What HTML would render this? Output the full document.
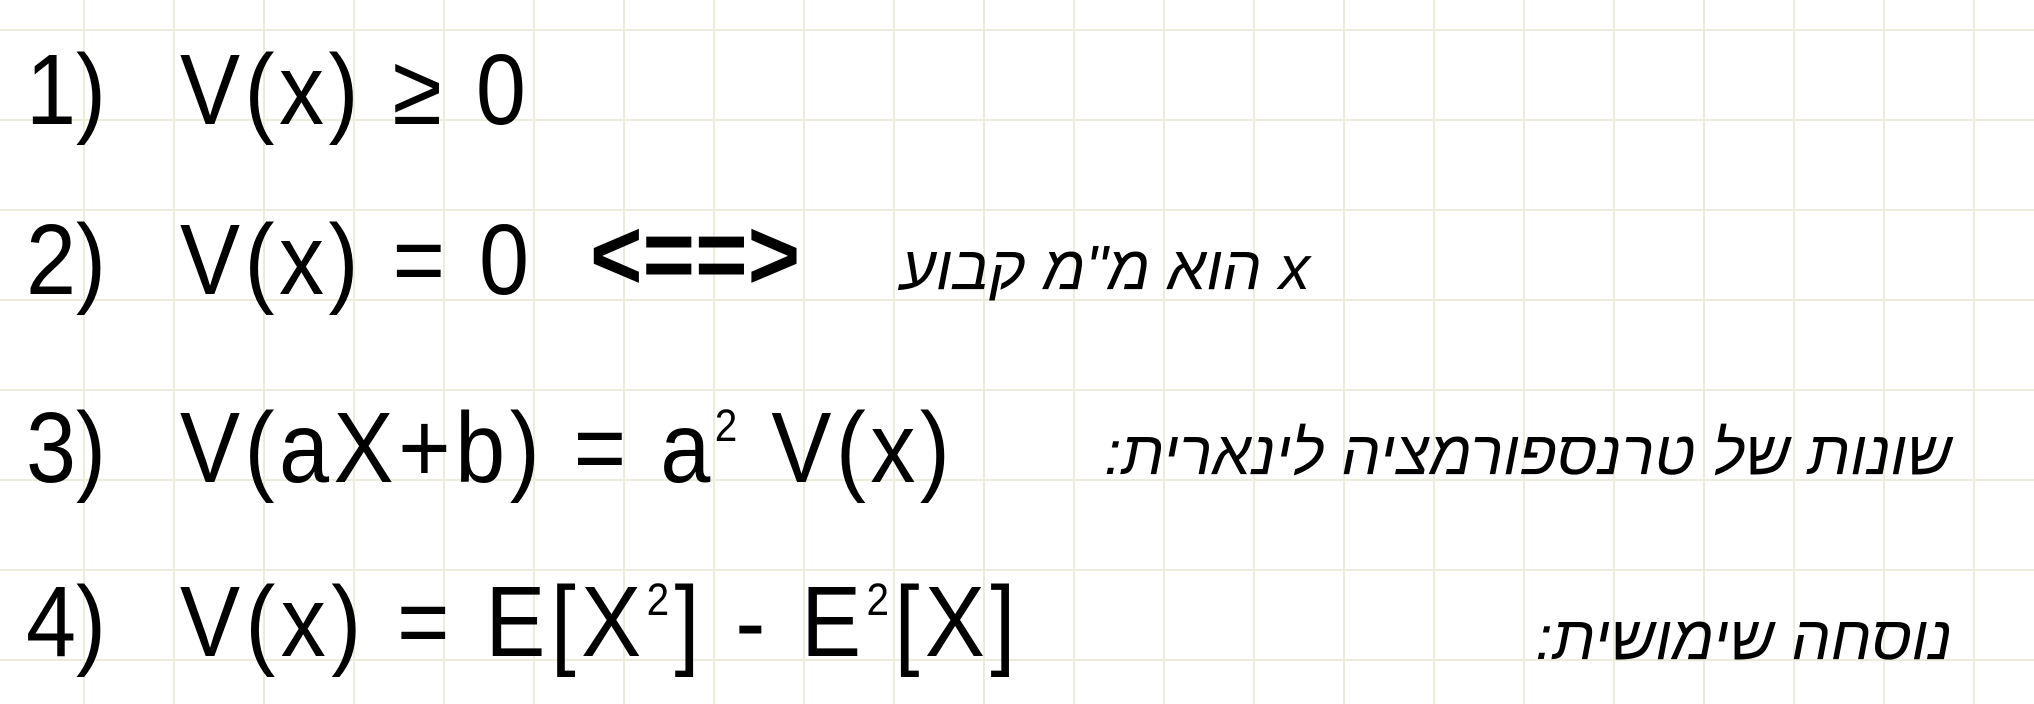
<!DOCTYPE html>
<html><head><meta charset="utf-8"><style>
html,body{margin:0;padding:0}
body{width:2034px;height:704px;overflow:hidden;background-color:#fff;
background-image:linear-gradient(to right,#ecebdc 2px,transparent 2px),linear-gradient(to bottom,#ecebdc 2px,transparent 2px);
background-size:90px 90px;background-position:83px 29px;position:relative;
font-family:"Liberation Sans","DejaVu Sans",sans-serif;color:#000}
.t{position:absolute;white-space:nowrap;line-height:1}
.m{font-size:100px;transform:scaleX(0.9);transform-origin:left top;letter-spacing:5px}
.h{font-size:62px;direction:rtl;font-style:italic}
sup{font-size:45%;vertical-align:top;position:relative;top:0.1em}
</style></head><body>
<div class="t m" style="left:26px;top:40px;letter-spacing:0">1)</div>
<div class="t m" style="left:180px;top:40px">V(x) ≥ 0</div>

<div class="t m" style="left:26px;top:210px;letter-spacing:0">2)</div>
<div class="t m" style="left:180px;top:210px">V(x) = 0</div>
<div class="t m" style="left:590px;top:205px;font-weight:bold;letter-spacing:0">&lt;==&gt;</div>
<div class="t h" style="right:724px;top:238px">x הוא מ"מ קבוע</div>

<div class="t m" style="left:26px;top:398px;letter-spacing:0">3)</div>
<div class="t m" style="left:180px;top:398px">V(aX+b) = a<sup>2</sup> V(x)</div>
<div class="t h" style="right:82px;top:423px">שונות של טרנספורמציה לינארית:</div>

<div class="t m" style="left:26px;top:572px;letter-spacing:0">4)</div>
<div class="t m" style="left:180px;top:572px;letter-spacing:6px">V(x) = E[X<sup>2</sup>] - E<sup>2</sup>[X]</div>
<div class="t h" style="right:82px;top:608px">נוסחה שימושית:</div>
</body></html>
